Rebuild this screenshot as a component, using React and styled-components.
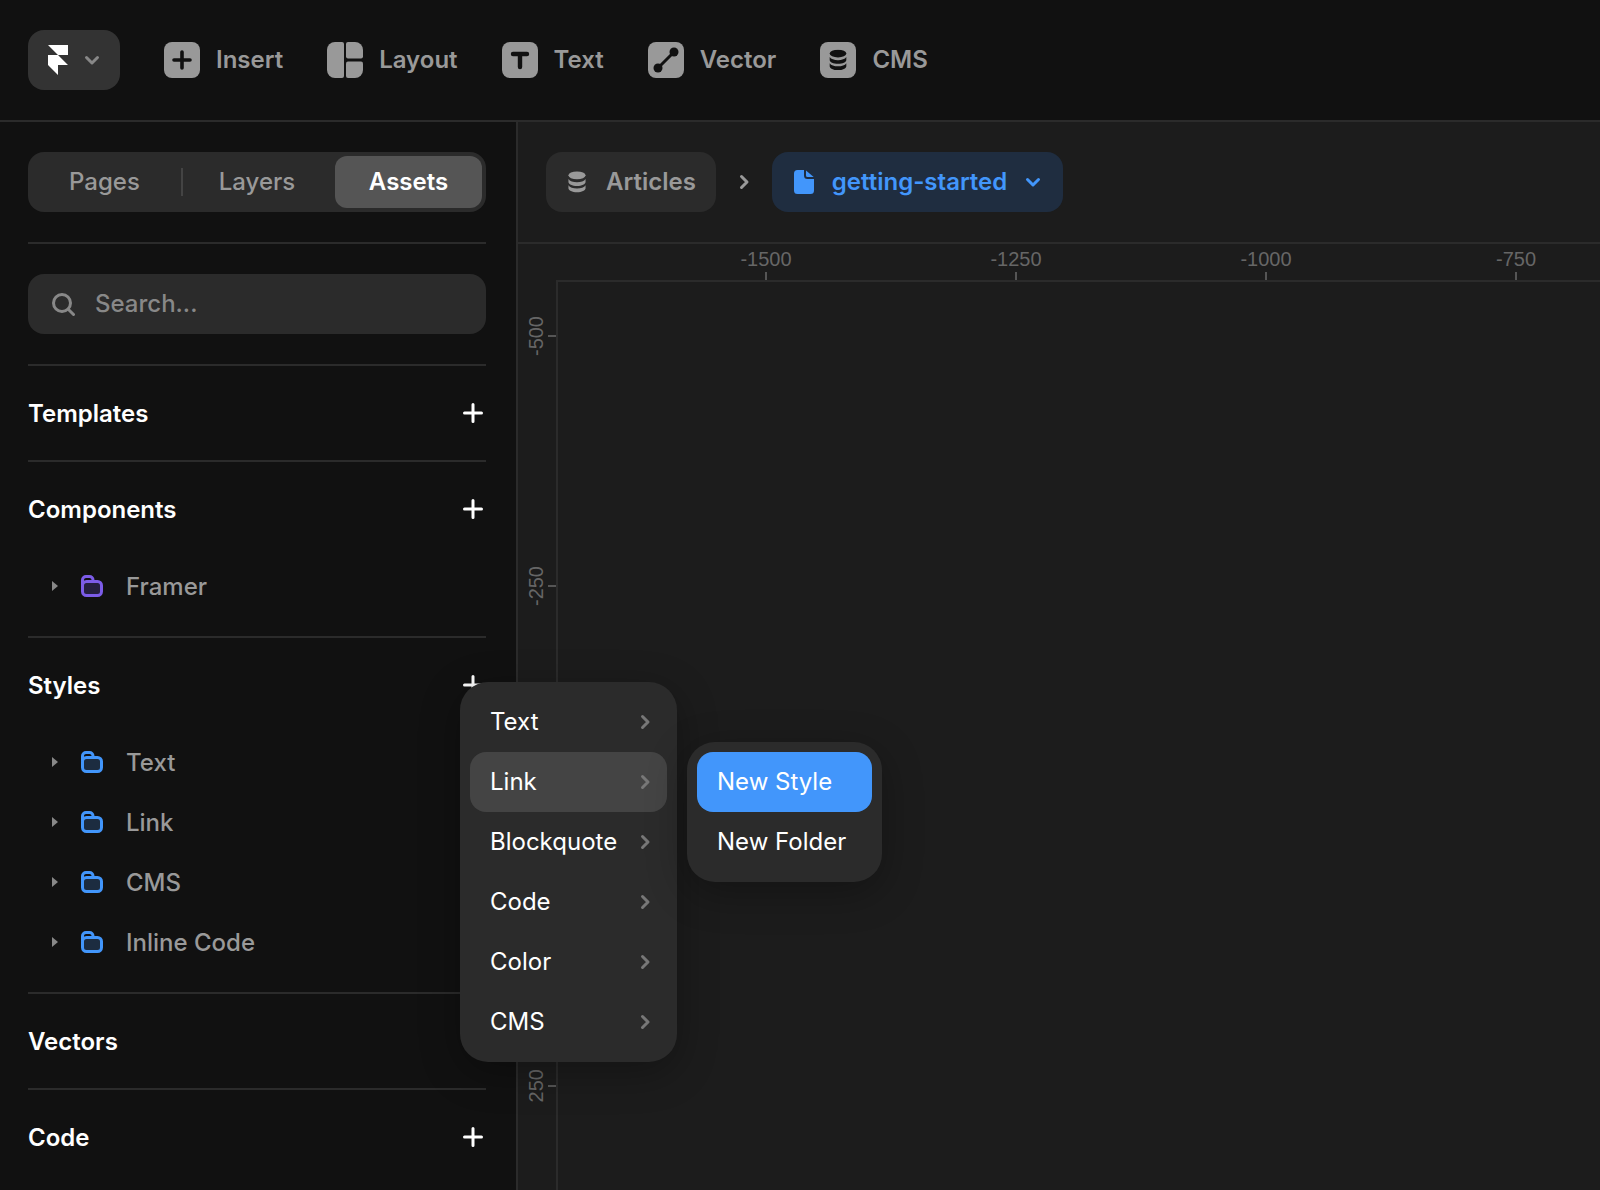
import React from 'react'
import styled, { createGlobalStyle } from 'styled-components'

const Global = createGlobalStyle`
  html, body {
    margin: 0;
    height: 100%;
    background: #1c1c1c;
    font-family: Inter, 'Noto Sans', sans-serif;
    font-size: 24px;
    -webkit-font-smoothing: antialiased;
  }
  * { box-sizing: border-box; }
`

const Page = styled.div`
  position: relative;
  width: 1600px;
  height: 1190px;
  overflow: hidden;
  display: flex;
  flex-direction: column;
`

// nudges the text 1px above the middle of its row, as in the real app
const Label = styled.span`
  padding-bottom: 2px;
`

const TopBar = styled.header`
  height: 122px;
  flex: none;
  display: flex;
  align-items: center;
  gap: 44px;
  padding: 0 28px;
  background: #111;
  border-bottom: 2px solid #2b2b2b;
`

const LogoButton = styled.div`
  width: 92px;
  height: 60px;
  display: flex;
  align-items: center;
  gap: 16px;
  padding-left: 20px;
  border-radius: 16px;
  background: #333;
`

const Tool = styled.div`
  display: flex;
  align-items: center;
  gap: 16px;
  color: #999;
  font-weight: 600;
`

const Main = styled.div`
  flex: 1;
  display: flex;
  min-height: 0;
`

const Sidebar = styled.aside`
  width: 518px;
  flex: none;
  background: #111;
  border-right: 2px solid #2b2b2b;
  padding: 0 30px 0 28px;
`

const Block = styled.div`
  padding: 30px 0;
  border-bottom: 2px solid #2b2b2b;
`

const Segments = styled.div`
  height: 60px;
  padding: 4px;
  display: grid;
  grid-template-columns: 149px 2px 152px 147px;
  align-items: center;
  border-radius: 16px;
  background: #2b2b2b;
`

const Segment = styled.div`
  height: 52px;
  display: flex;
  align-items: center;
  justify-content: center;
  padding-right: ${p => (p.$active ? '0' : '4px')};
  border-radius: 12px;
  color: ${p => (p.$active ? '#fff' : '#999')};
  background: ${p => (p.$active ? '#555' : 'transparent')};
  font-weight: ${p => (p.$active ? 600 : 500)};
`

const SegmentRule = styled.div`
  width: 2px;
  height: 28px;
  background: #444;
`

const Search = styled.div`
  height: 60px;
  display: flex;
  align-items: center;
  gap: 20px;
  padding-left: 23px;
  border-radius: 16px;
  background: #2b2b2b;
  color: #888;
  font-weight: 500;
`

const Section = styled.section`
  padding-bottom: ${p => (p.$hasRows ? '20px' : '0')};
  border-bottom: ${p => (p.$last ? 'none' : '2px solid #2b2b2b')};
`

const SectionHead = styled.div`
  height: 94px;
  display: flex;
  align-items: center;
  justify-content: space-between;
  padding-right: 3px;
  color: #fff;
  font-weight: 600;
`

const Row = styled.div`
  height: 60px;
  display: flex;
  align-items: center;
  padding-left: 24px;
  color: #999;
  font-weight: 500;
`

const Caret = styled.svg`
  width: 6px;
  height: 10px;
  margin-right: 23px;
`

const RowLabel = styled.span`
  margin-left: 23px;
`

const Canvas = styled.main`
  flex: 1;
  min-width: 0;
  display: flex;
  flex-direction: column;
  background: #1c1c1c;
`

const Crumbs = styled.div`
  height: 122px;
  flex: none;
  display: flex;
  align-items: center;
  padding-left: 28px;
  border-bottom: 2px solid #2b2b2b;
`

const Crumb = styled.div`
  height: 60px;
  display: flex;
  align-items: center;
  gap: ${p => (p.$current ? '18px' : '20px')};
  padding: ${p => (p.$current ? '0 22px' : '0 20px 0 22px')};
  border-radius: 16px;
  font-weight: 600;
  color: ${p => (p.$current ? '#4296fb' : '#999')};
  background: ${p => (p.$current ? '#1f2d40' : '#2b2b2b')};
`

const CrumbGap = styled.div`
  width: 56px;
  display: flex;
  justify-content: center;
`

const HRuler = styled.div`
  height: 36px;
  flex: none;
  display: flex;
  padding-left: 123px;
`

const HMark = styled.div`
  width: 250px;
  flex: none;
  display: flex;
  flex-direction: column;
  align-items: center;
  justify-content: flex-end;
  color: #666;
  font: 20px/1 'Liberation Sans', Arial, sans-serif;
`

const HTick = styled.div`
  width: 2px;
  height: 8px;
  margin-top: 3px;
  background: #555;
`

const Stage = styled.div`
  flex: 1;
  min-height: 0;
  display: flex;
`

const VRuler = styled.div`
  width: 38px;
  flex: none;
  overflow: hidden;
`

const VMarks = styled.div`
  margin-top: -69px;
`

const VMark = styled.div`
  height: 250px;
  display: flex;
  align-items: center;
  justify-content: flex-end;
  gap: 2px;
  color: #666;
  font: 20px/1 'Liberation Sans', Arial, sans-serif;
`

const VLabel = styled.span`
  writing-mode: vertical-rl;
  transform: rotate(180deg);
`

const VTick = styled.div`
  width: 8px;
  height: 2px;
  background: #555;
`

const Board = styled.div`
  flex: 1;
  border-top: 2px solid #2b2b2b;
  border-left: 2px solid #2b2b2b;
`

const Menu = styled.div`
  position: absolute;
  left: ${p => p.$left}px;
  top: ${p => p.$top}px;
  width: ${p => p.$width}px;
  padding: 10px;
  border-radius: 28px;
  background: #2b2b2b;
  box-shadow: 0 10px 40px rgba(0, 0, 0, 0.3);
`

const MenuItem = styled.div`
  height: 60px;
  display: flex;
  align-items: center;
  justify-content: space-between;
  padding: 0 14px 0 20px;
  border-radius: 16px;
  color: #fff;
  background: ${p => (p.$tone === 'blue' ? '#4296fb' : p.$tone === 'hover' ? '#444' : 'transparent')};
`

const Chevron = ({ dir = 'right', color = '#777', size = 16, width = 3 }) => (
  <svg width={size} height={size} viewBox="0 0 16 16" fill="none" stroke={color} strokeWidth={width} strokeLinecap="round" strokeLinejoin="round">
    <path d={dir === 'right' ? 'M5.5 2.5 11 8l-5.5 5.5' : 'M2.5 5.5 8 11l5.5-5.5'} />
  </svg>
)

const Plus = () => (
  <svg width="20" height="20" viewBox="0 0 20 20" stroke="#fff" strokeWidth="3" strokeLinecap="round">
    <path d="M10 1.5v17M1.5 10h17" />
  </svg>
)

const FramerLogo = () => (
  <svg width="20" height="30" viewBox="4 0 16 24" fill="#fff">
    <path d="M4 0h16v8h-8L4 0zm0 8h8l8 8h-8v8l-8-8V8z" />
  </svg>
)

const Stack = ({ color, ...rest }) => (
  <svg width="18" height="22" viewBox="0 0 20 24" fill={color} {...rest}>
    <ellipse cx="10" cy="4.6" rx="9.5" ry="4.4" />
    <path d="M.5 8.6C2 11 5.6 12.2 10 12.2s8-1.2 9.5-3.6V12c0 2.5-4.2 4.4-9.500 4.4S.5 14.500.5 12V8.6z" />
    <path d="M.5 15.6C2 18 5.6 19.2 10 19.200s8-1.200 9.5-3.600V19c0 2.500-4.200 4.500-9.500 4.500S.5 21.500.5 19v-3.400z" />
  </svg>
)

const ToolGlyph = ({ children }) => (
  <svg width="36" height="36" viewBox="0 0 36 36">
    <rect width="36" height="36" rx="8" fill="#999" />
    {children}
  </svg>
)

const LayoutGlyph = () => (
  <svg width="36" height="36" viewBox="0 0 36 36" fill="#999">
    <path d="M8 0h7a2 2 0 0 1 2 2v32a2 2 0 0 1-2 2H8a8 8 0 0 1-8-8V8a8 8 0 0 1 8-8z" />
    <path d="M19 2a2 2 0 0 1 2-2h7a8 8 0 0 1 8 8v6.5a2 2 0 0 1-2 2H21a2 2 0 0 1-2-2z" />
    <path d="M19 21.5a2 2 0 0 1 2-2h13a2 2 0 0 1 2 2V28a8 8 0 0 1-8 8h-7a2 2 0 0 1-2-2z" />
  </svg>
)

const SearchGlyph = () => (
  <svg width="24" height="24" viewBox="0 0 24 24" fill="none" stroke="#888" strokeWidth="3" strokeLinecap="round">
    <circle cx="11" cy="11" r="8.5" />
    <path d="m17.5 17.5 5 5" />
  </svg>
)

const DocGlyph = () => (
  <svg width="20" height="24" viewBox="0 0 20 24" fill="#4296fb">
    <path d="M3.5 0H10v5.5A3.500 3.500 0 0 0 13.500 9H20v11.500a3.500 3.500 0 0 1-3.500 3.500h-13A3.500 3.500 0 0 1 0 20.500v-17A3.500 3.500 0 0 1 3.500 0z" />
    <path d="M12 .5 19.700 7H13.500A1.500 1.500 0 0 1 12 5.500z" />
  </svg>
)

const Folder = ({ color, tint }) => (
  <svg width="22" height="22" viewBox="0 0 22 22" fill="none" stroke={color} strokeWidth="3" strokeLinejoin="round">
    <rect x="1.5" y="6.5" width="19" height="14" rx="4" fill={tint} />
    <path d="M1.5 10V5A3.500 3.500 0 0 1 5 1.500h3.500A3.500 3.500 0 0 1 12 5v1.500" />
  </svg>
)

const tools = [
  {
    label: 'Insert',
    icon: <ToolGlyph><path d="M18 10v16M10 18h16" stroke="#111" strokeWidth="3.6" strokeLinecap="round" /></ToolGlyph>
  },
  { label: 'Layout', icon: <LayoutGlyph /> },
  {
    label: 'Text',
    icon: <ToolGlyph><path d="M11 12h14M18 12v13" stroke="#111" strokeWidth="4.4" strokeLinecap="round" /></ToolGlyph>
  },
  {
    label: 'Vector',
    icon: (
      <ToolGlyph>
        <path d="M10 26 26 10" stroke="#111" strokeWidth="3" />
        <circle cx="10" cy="26" r="4.5" fill="#111" />
        <circle cx="26" cy="10" r="4.5" fill="#111" />
      </ToolGlyph>
    )
  },
  {
    label: 'CMS',
    icon: <ToolGlyph><Stack color="#111" x="9" y="7.5" height="21" /></ToolGlyph>
  }
]

const Caretted = ({ color, tint, label }) => (
  <Row>
    <Caret viewBox="0 0 6 10"><path d="M0 0l6 5-6 5z" fill="#888" /></Caret>
    <Folder color={color} tint={tint} />
    <RowLabel>{label}</RowLabel>
  </Row>
)

const BLUE = ['#4296fb', '#1c2c40']
const PURPLE = ['#7c5ce8', '#251f40']

const App = () => (
  <Page>
    <Global />
    <TopBar>
      <LogoButton>
        <FramerLogo />
        <Chevron dir="down" color="#888" size={16} />
      </LogoButton>
      {tools.map(tool => (
        <Tool key={tool.label}>
          {tool.icon}
          <Label>{tool.label}</Label>
        </Tool>
      ))}
    </TopBar>
    <Main>
      <Sidebar>
        <Block>
          <Segments>
            <Segment><Label>Pages</Label></Segment>
            <SegmentRule />
            <Segment><Label>Layers</Label></Segment>
            <Segment $active><Label>Assets</Label></Segment>
          </Segments>
        </Block>
        <Block>
          <Search>
            <SearchGlyph />
            <Label>Search...</Label>
          </Search>
        </Block>
        <Section>
          <SectionHead>Templates<Plus /></SectionHead>
        </Section>
        <Section $hasRows>
          <SectionHead>Components<Plus /></SectionHead>
          <Caretted color={PURPLE[0]} tint={PURPLE[1]} label="Framer" />
        </Section>
        <Section $hasRows>
          <SectionHead>Styles<Plus /></SectionHead>
          {['Text', 'Link', 'CMS', 'Inline Code'].map(label => (
            <Caretted key={label} color={BLUE[0]} tint={BLUE[1]} label={label} />
          ))}
        </Section>
        <Section>
          <SectionHead>Vectors</SectionHead>
        </Section>
        <Section $last>
          <SectionHead>Code<Plus /></SectionHead>
        </Section>
      </Sidebar>
      <Canvas>
        <Crumbs>
          <Crumb>
            <Stack color="#999" />
            <Label>Articles</Label>
          </Crumb>
          <CrumbGap><Chevron color="#999" /></CrumbGap>
          <Crumb $current>
            <DocGlyph />
            <Label>getting-started</Label>
            <Chevron dir="down" color="#4296fb" />
          </Crumb>
        </Crumbs>
        <HRuler>
          {['-1500', '-1250', '-1000', '-750'].map(label => (
            <HMark key={label}>
              {label}
              <HTick />
            </HMark>
          ))}
        </HRuler>
        <Stage>
          <VRuler>
            <VMarks>
              {['-500', '-250', '0', '250'].map(label => (
                <VMark key={label}>
                  <VLabel>{label}</VLabel>
                  <VTick />
                </VMark>
              ))}
            </VMarks>
          </VRuler>
          <Board />
        </Stage>
      </Canvas>
    </Main>
    <Menu $left={460} $top={682} $width={217}>
      {['Text', 'Link', 'Blockquote', 'Code', 'Color', 'CMS'].map(label => (
        <MenuItem key={label} $tone={label === 'Link' ? 'hover' : undefined}>
          <Label>{label}</Label>
          <Chevron />
        </MenuItem>
      ))}
    </Menu>
    <Menu $left={687} $top={742} $width={195}>
      <MenuItem $tone="blue"><Label>New Style</Label></MenuItem>
      <MenuItem><Label>New Folder</Label></MenuItem>
    </Menu>
  </Page>
)

export default App
